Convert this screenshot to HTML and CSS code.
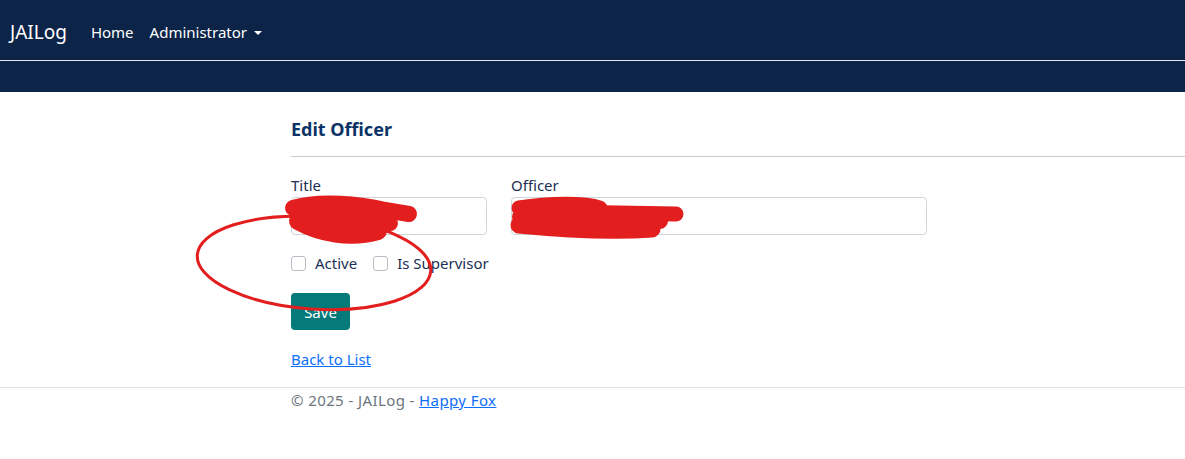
FILE: index.html
```html
<!DOCTYPE html>
<html lang="en">
<head>
  <meta charset="UTF-8" />
  <meta name="viewport" content="width=device-width, initial-scale=1" />
  <title>Edit Officer - JAILog</title>
  <link rel="stylesheet" href="styles.css">
</head>
<body>
  <header class="navbar">
    <div class="nav-top">
      <a class="brand" href="#">JAILog</a>
      <nav class="nav-links">
        <a href="#">Home</a>
        <a href="#" class="dropdown">Administrator <span class="caret"></span></a>
      </nav>
    </div>
    <div class="nav-band"></div>
  </header>

  <main class="content">
    <h2>Edit Officer</h2>
    <hr />

    <form class="officer-form">
      <div class="form-row">
        <div class="field field-title">
          <label for="title">Title</label>
          <input type="text" id="title" />
        </div>
        <div class="field field-officer">
          <label for="officer">Officer</label>
          <input type="text" id="officer" />
        </div>
      </div>

      <div class="check-row">
        <label class="check"><input type="checkbox" /> Active</label>
        <label class="check"><input type="checkbox" /> Is Supervisor</label>
      </div>

      <button type="button" class="btn-save">Save</button>
    </form>

    <a class="back-link" href="#">Back to List</a>
  </main>

  <footer class="footer">
    <div class="footer-inner">© 2025 - JAILog - <a href="#">Happy Fox</a></div>
  </footer>

  <!-- markup drawn over the screenshot -->
  <svg class="marks" width="1185" height="459" viewBox="0 0 1185 459">
    <g fill="none" stroke="#e31e1e" stroke-linecap="round" stroke-linejoin="round">
      <path d="M293,208 C320,200 360,204 385,210 L409,214" stroke-width="16" />
      <path d="M298,221 C320,233 350,239 378,231" stroke-width="18" />
      <path d="M300,215 L390,223" stroke-width="16" />
      <path d="M519,208 C550,203 585,203 600,208" stroke-width="15" />
      <path d="M560,212 L676,214" stroke-width="15" />
      <path d="M519,225 C560,229 610,232 652,229" stroke-width="17" />
      <path d="M520,217 L660,221" stroke-width="16" />
      <ellipse cx="314" cy="263" rx="117" ry="46" transform="rotate(4 314 263)" stroke-width="3" />
    </g>
  </svg>
</body>
</html>
```

FILE: styles.css
```css
body {
  margin: 0;
  font-family: "Noto Sans", "Open Sans", sans-serif;
  font-size: 15px;
  color: #1b2f55;
  background: #fff;
  position: relative;
}

.navbar {
  background: #0b2447;
}

.nav-top {
  display: flex;
  align-items: center;
  height: 61px;
  padding-left: 10px;
  padding-top: 4px;
  box-sizing: border-box;
  border-bottom: 1px solid #e4e7ec;
}

.brand {
  color: #fff;
  text-decoration: none;
  font-size: 19px;
  margin-right: 24px;
}

.nav-links {
  display: flex;
  gap: 16px;
}

.nav-links a {
  color: #fff;
  text-decoration: none;
  font-size: 15px;
}

.caret {
  display: inline-block;
  margin-left: 3px;
  vertical-align: 3px;
  border-top: 4px solid #fff;
  border-left: 4px solid transparent;
  border-right: 4px solid transparent;
}

.nav-band {
  height: 31px;
}

.content {
  margin-left: 291px;
  padding-top: 24px;
}

h2 {
  margin: 0;
  font-size: 18px;
  font-weight: 700;
  line-height: 27px;
  color: #0b3366;
}

hr {
  margin: 13px 0 17px;
  border: none;
  border-top: 1px solid #c8cbd0;
}

.form-row {
  display: flex;
  gap: 24px;
}

.field label {
  display: block;
  line-height: 22px;
  height: 23px;
}

.field input {
  box-sizing: border-box;
  height: 38px;
  border: 1px solid #ced4da;
  border-radius: 4px;
  padding: 6px 10px;
  font: inherit;
}

.field-title input {
  width: 196px;
}

.field-officer input {
  width: 416px;
}

.check-row {
  display: flex;
  gap: 16px;
  margin-top: 17px;
  line-height: 22px;
}

.check {
  display: flex;
  align-items: center;
  gap: 9px;
}

.check input {
  appearance: none;
  width: 15px;
  height: 15px;
  margin: 0;
  border: 1px solid #b9bec6;
  border-radius: 3px;
  background: #fff;
}

.btn-save {
  display: block;
  margin-top: 19px;
  width: 59px;
  height: 37px;
  border: none;
  border-radius: 4px;
  background: #047a7a;
  color: #fff;
  font: inherit;
}

.back-link {
  display: inline-block;
  margin-top: 18px;
  line-height: 22px;
  color: #0d6efd;
}

.footer {
  margin-top: 17px;
  border-top: 1px solid #dee2e6;
}

.footer-inner {
  margin-left: 291px;
  padding-top: 1px;
  line-height: 22px;
  color: #6c757d;
  letter-spacing: 0.4px;
}

.footer-inner a {
  color: #0d6efd;
}

.marks {
  position: absolute;
  top: 0;
  left: 0;
  pointer-events: none;
}
```
